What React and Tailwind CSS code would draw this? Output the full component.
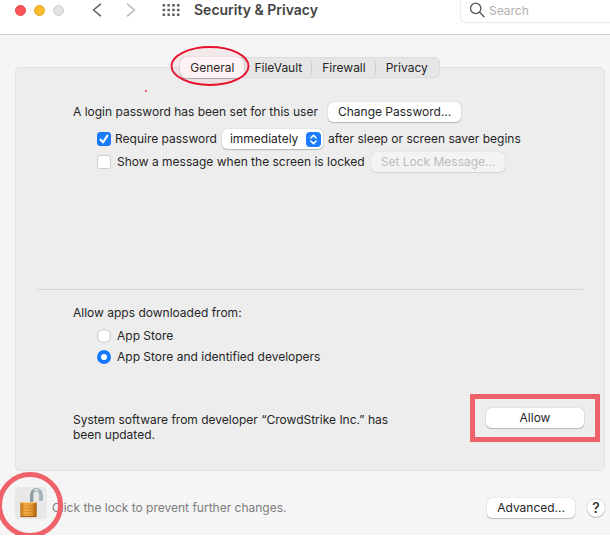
import React from 'react';

const tabs = ['General', 'FileVault', 'Firewall', 'Privacy'];

const PushButton = ({ children, className = '', ...props }) => (
  <button
    type="button"
    className={`h-5 shrink-0 rounded-[5px] bg-white px-2.5 leading-5 whitespace-nowrap shadow-[0_0_1px_rgba(0,0,0,0.35),0_1px_1px_rgba(0,0,0,0.2)] disabled:bg-[#f3f3f3] disabled:text-[#bcbcbc] disabled:shadow-[0_0_1px_rgba(0,0,0,0.25),0_1px_1px_rgba(0,0,0,0.08)] ${className}`}
    {...props}
  >
    {children}
  </button>
);

const Checkbox = ({ id, defaultChecked }) => (
  <span className="grid shrink-0">
    <input
      id={id}
      type="checkbox"
      defaultChecked={defaultChecked}
      className="peer col-start-1 row-start-1 size-3.5 appearance-none rounded-[3px] border border-[#cfcfcf] bg-white checked:border-[#1a75f5] checked:bg-[#1b7cfb]"
    />
    <svg
      viewBox="0 0 14 14"
      className="pointer-events-none invisible col-start-1 row-start-1 size-3.5 peer-checked:visible"
      fill="none"
      stroke="white"
      strokeWidth="2"
      strokeLinecap="round"
      strokeLinejoin="round"
    >
      <path d="M3.6 7.6 6 10.4 10.4 3.6" />
    </svg>
  </span>
);

const Radio = ({ id, label, defaultChecked }) => (
  <div className="flex items-center gap-1.5">
    <input
      id={id}
      type="radio"
      name="apps"
      defaultChecked={defaultChecked}
      className="size-3.5 shrink-0 appearance-none rounded-full border border-[#c9c9c9] bg-white checked:border-4 checked:border-[#1479fc]"
    />
    <label htmlFor={id}>{label}</label>
  </div>
);

const Toolbar = () => (
  <header className="flex h-[35px] items-start border-b border-[#cfcfcf] bg-white">
    <div className="flex h-5 flex-1 items-center pl-[15px]">
      <div className="flex gap-2">
        <button type="button" aria-label="Close" className="size-[11px] rounded-full border border-[#e2444a] bg-[#fc5558]" />
        <button type="button" aria-label="Minimize" className="size-[11px] rounded-full border border-[#e0a023] bg-[#fdbc2e]" />
        <button type="button" aria-label="Zoom" disabled className="size-[11px] rounded-full border border-[#cfcfcf] bg-[#e2e2e2]" />
      </div>
      <button type="button" aria-label="Back" className="ml-7">
        <svg viewBox="0 0 10 16" className="h-4 w-2.5" fill="none" stroke="#636363" strokeWidth="1.6" strokeLinecap="round" strokeLinejoin="round">
          <path d="M8.5 2.2 1.5 8l7 5.8" />
        </svg>
      </button>
      <button type="button" aria-label="Forward" disabled className="ml-6">
        <svg viewBox="0 0 10 16" className="h-4 w-2.5" fill="none" stroke="#b9b9b9" strokeWidth="1.6" strokeLinecap="round" strokeLinejoin="round">
          <path d="M1.5 2.2l7 5.8-7 5.8" />
        </svg>
      </button>
      <button type="button" aria-label="Show All" className="ml-[26px]">
        <svg viewBox="0 0 18 12" className="h-3 w-[18px]" fill="#5f5f5f">
          {[0, 4.7, 9.4].map((y) =>
            [0.5, 5.3, 10.1, 14.9].map((x) => (
              <rect key={`${x}-${y}`} x={x} y={y} width="2.7" height="2.6" rx="0.7" />
            ))
          )}
        </svg>
      </button>
      <h1 className="ml-3.5 text-[14px] leading-5 font-semibold text-[#444]">Security &amp; Privacy</h1>
    </div>
    <label className="flex h-[23px] w-[150px] items-start gap-1 rounded-bl-md border-b border-l border-[#ececec] pl-2">
      <svg viewBox="0 0 16 16" className="mt-0.5 size-4 shrink-0" fill="none" stroke="#555" strokeWidth="1.3" strokeLinecap="round">
        <circle cx="6.7" cy="6.4" r="5.2" />
        <path d="M10.6 10.3 15 14.8" />
      </svg>
      <input
        type="search"
        aria-label="Search"
        placeholder="Search"
        className="h-5 w-full min-w-0 bg-transparent text-[12px] placeholder:text-[#b0b0b0]"
      />
    </label>
  </header>
);

const Tabs = () => (
  <div role="tablist" className="relative z-10 mx-auto flex h-[21px] w-fit rounded-[6px] bg-[#e6e6e6] pr-0.5 ring-1 ring-[#dcdcdc] ring-inset">
    {tabs.map((tab, i) => (
      <div key={tab} className="relative flex items-center">
        <button
          type="button"
          role="tab"
          aria-selected={i === 0}
          className="h-[21px] rounded-[6px] px-2.5 leading-5 aria-selected:bg-white aria-selected:shadow-[0_0_1px_rgba(0,0,0,0.35),0_1px_1px_rgba(0,0,0,0.25)]"
        >
          {tab}
        </button>
        {(i === 1 || i === 2) && <span className="absolute right-0 h-3 w-px bg-[#cfcfcf]" />}
        {i === 0 && (
          <svg viewBox="0 0 80 42" className="pointer-events-none absolute -top-3 -left-2.5 h-[42px] w-20 max-w-none">
            <ellipse cx="40" cy="21" rx="38.5" ry="19" fill="#e8112d" fillOpacity="0.05" stroke="#e8112d" strokeWidth="1.9" />
          </svg>
        )}
      </div>
    ))}
  </div>
);

const Padlock = () => (
  <svg viewBox="0 0 32 32" className="size-8">
    <defs>
      <linearGradient id="brass" x1="0" x2="1" y1="0" y2="0">
        <stop offset="0" stopColor="#c07318" />
        <stop offset="0.3" stopColor="#f3ae4a" />
        <stop offset="0.7" stopColor="#e29530" />
        <stop offset="1" stopColor="#a45a0c" />
      </linearGradient>
      <linearGradient id="steel" x1="0" x2="1" y1="0" y2="0">
        <stop offset="0" stopColor="#8798a3" />
        <stop offset="0.5" stopColor="#e3edf2" />
        <stop offset="1" stopColor="#9fb0ba" />
      </linearGradient>
    </defs>
    <path d="M16.8 15.5V8c0-3 1.8-5.2 4.5-5.2S26 5 26 8v5.6" fill="none" stroke="#75858f" strokeWidth="3" />
    <path d="M16.8 15.5V8c0-3 1.8-5.2 4.5-5.2S26 5 26 8v5.3" fill="none" stroke="url(#steel)" strokeWidth="2" />
    <rect x="5.3" y="15" width="16.4" height="15" rx="1" fill="url(#brass)" />
    <path d="M6 15.6h15" stroke="#f9cf83" strokeWidth="1" />
    <path d="M6 18.5h15M6 21.5h15M6 24.5h15M6 27.5h15" stroke="#a9610f" strokeOpacity="0.28" strokeWidth="0.8" />
    <path d="M6 29.6h15" stroke="#824708" strokeWidth="0.8" />
  </svg>
);

const GeneralPanel = () => (
  <section className="relative -mt-[11px] rounded-[5px] border border-[#e2e2e2] bg-[#ededed] px-[21px] pt-[34px] pb-7">
    <span className="absolute top-[22px] left-[129px] size-0.5 bg-[#ec5b64]" />
    <div className="px-9">
      <div className="flex h-5 items-center gap-2.5">
        <p className="whitespace-nowrap">A login password has been set for this user</p>
        <PushButton>Change Password...</PushButton>
      </div>
      <div className="mt-[7px] flex h-5 items-center gap-1 pl-6 whitespace-nowrap">
        <Checkbox id="require" defaultChecked />
        <label htmlFor="require">Require password</label>
        <span className="ml-px grid items-center">
          <select
            aria-label="Require password delay"
            className="col-start-1 row-start-1 h-5 appearance-none rounded-[5px] bg-white pr-6 pl-2 shadow-[0_0_1px_rgba(0,0,0,0.35),0_1px_1px_rgba(0,0,0,0.2)]"
          >
            <option>immediately</option>
          </select>
          <svg viewBox="0 0 15 15" className="pointer-events-none col-start-1 row-start-1 mr-0.5 size-[15px] justify-self-end">
            <rect width="15" height="15" rx="4" fill="#1c7dfb" />
            <path d="M4.8 6 7.5 3.4 10.2 6M4.8 9l2.7 2.6L10.2 9" fill="none" stroke="white" strokeWidth="1.5" strokeLinecap="round" strokeLinejoin="round" />
          </svg>
        </span>
        <span className="ml-px">after sleep or screen saver begins</span>
      </div>
      <div className="mt-[3px] flex h-5 items-center gap-1.5 pl-6 whitespace-nowrap">
        <Checkbox id="message" />
        <label htmlFor="message">Show a message when the screen is locked</label>
        <PushButton disabled>Set Lock Message...</PushButton>
      </div>
    </div>

    <hr className="mt-[117px] border-[#d5d5d5]" />

    <div className="pl-9">
      <fieldset className="pt-[15px]">
        <legend className="float-left mb-[7px] w-full leading-4">Allow apps downloaded from:</legend>
        <div className="clear-both flex flex-col gap-[5px] pl-6 leading-4">
          <Radio id="store" label="App Store" />
          <Radio id="identified" label="App Store and identified developers" defaultChecked />
        </div>
      </fieldset>
      <div className="-mr-[17px] mt-[29px] flex items-end justify-between">
        <p className="w-[330px] leading-[15px]">
          System software from developer “CrowdStrike Inc.” has been updated.
        </p>
        <div className="border-[5px] border-[#f0626a] px-[11px] py-[9px]">
          <PushButton className="w-[98px]">Allow</PushButton>
        </div>
      </div>
    </div>
  </section>
);

const App = () => (
  <div className="overflow-hidden bg-[#f5f5f5] font-['Inter',sans-serif] text-[12px] text-[#262626]">
    <Toolbar />
    <main className="pt-[22px] pr-[5px] pb-4 pl-[15px]">
      <Tabs />
      <GeneralPanel />
      <footer className="mt-4 flex items-end">
        <div className="relative">
          <button type="button" aria-label="Lock" className="block rounded-[4px] bg-[#e8e8e8]">
            <Padlock />
          </button>
          <span className="pointer-events-none absolute -top-[15px] -left-[18px] z-10 size-[66px] rounded-full border-[5px] border-[#f0626a]" />
        </div>
        <div className="ml-[5px] flex h-[22px] flex-1 items-center">
          <p className="flex-1 text-[#7c7c7c]">Click the lock to prevent further changes.</p>
          <PushButton>Advanced...</PushButton>
          <button
            type="button"
            aria-label="Help"
            className="ml-3 size-[18px] rounded-full bg-white text-[14px] leading-[18px] font-medium shadow-[0_0_1px_rgba(0,0,0,0.35),0_1px_1px_rgba(0,0,0,0.2)]"
          >
            ?
          </button>
        </div>
      </footer>
    </main>
  </div>
);

export default App;
